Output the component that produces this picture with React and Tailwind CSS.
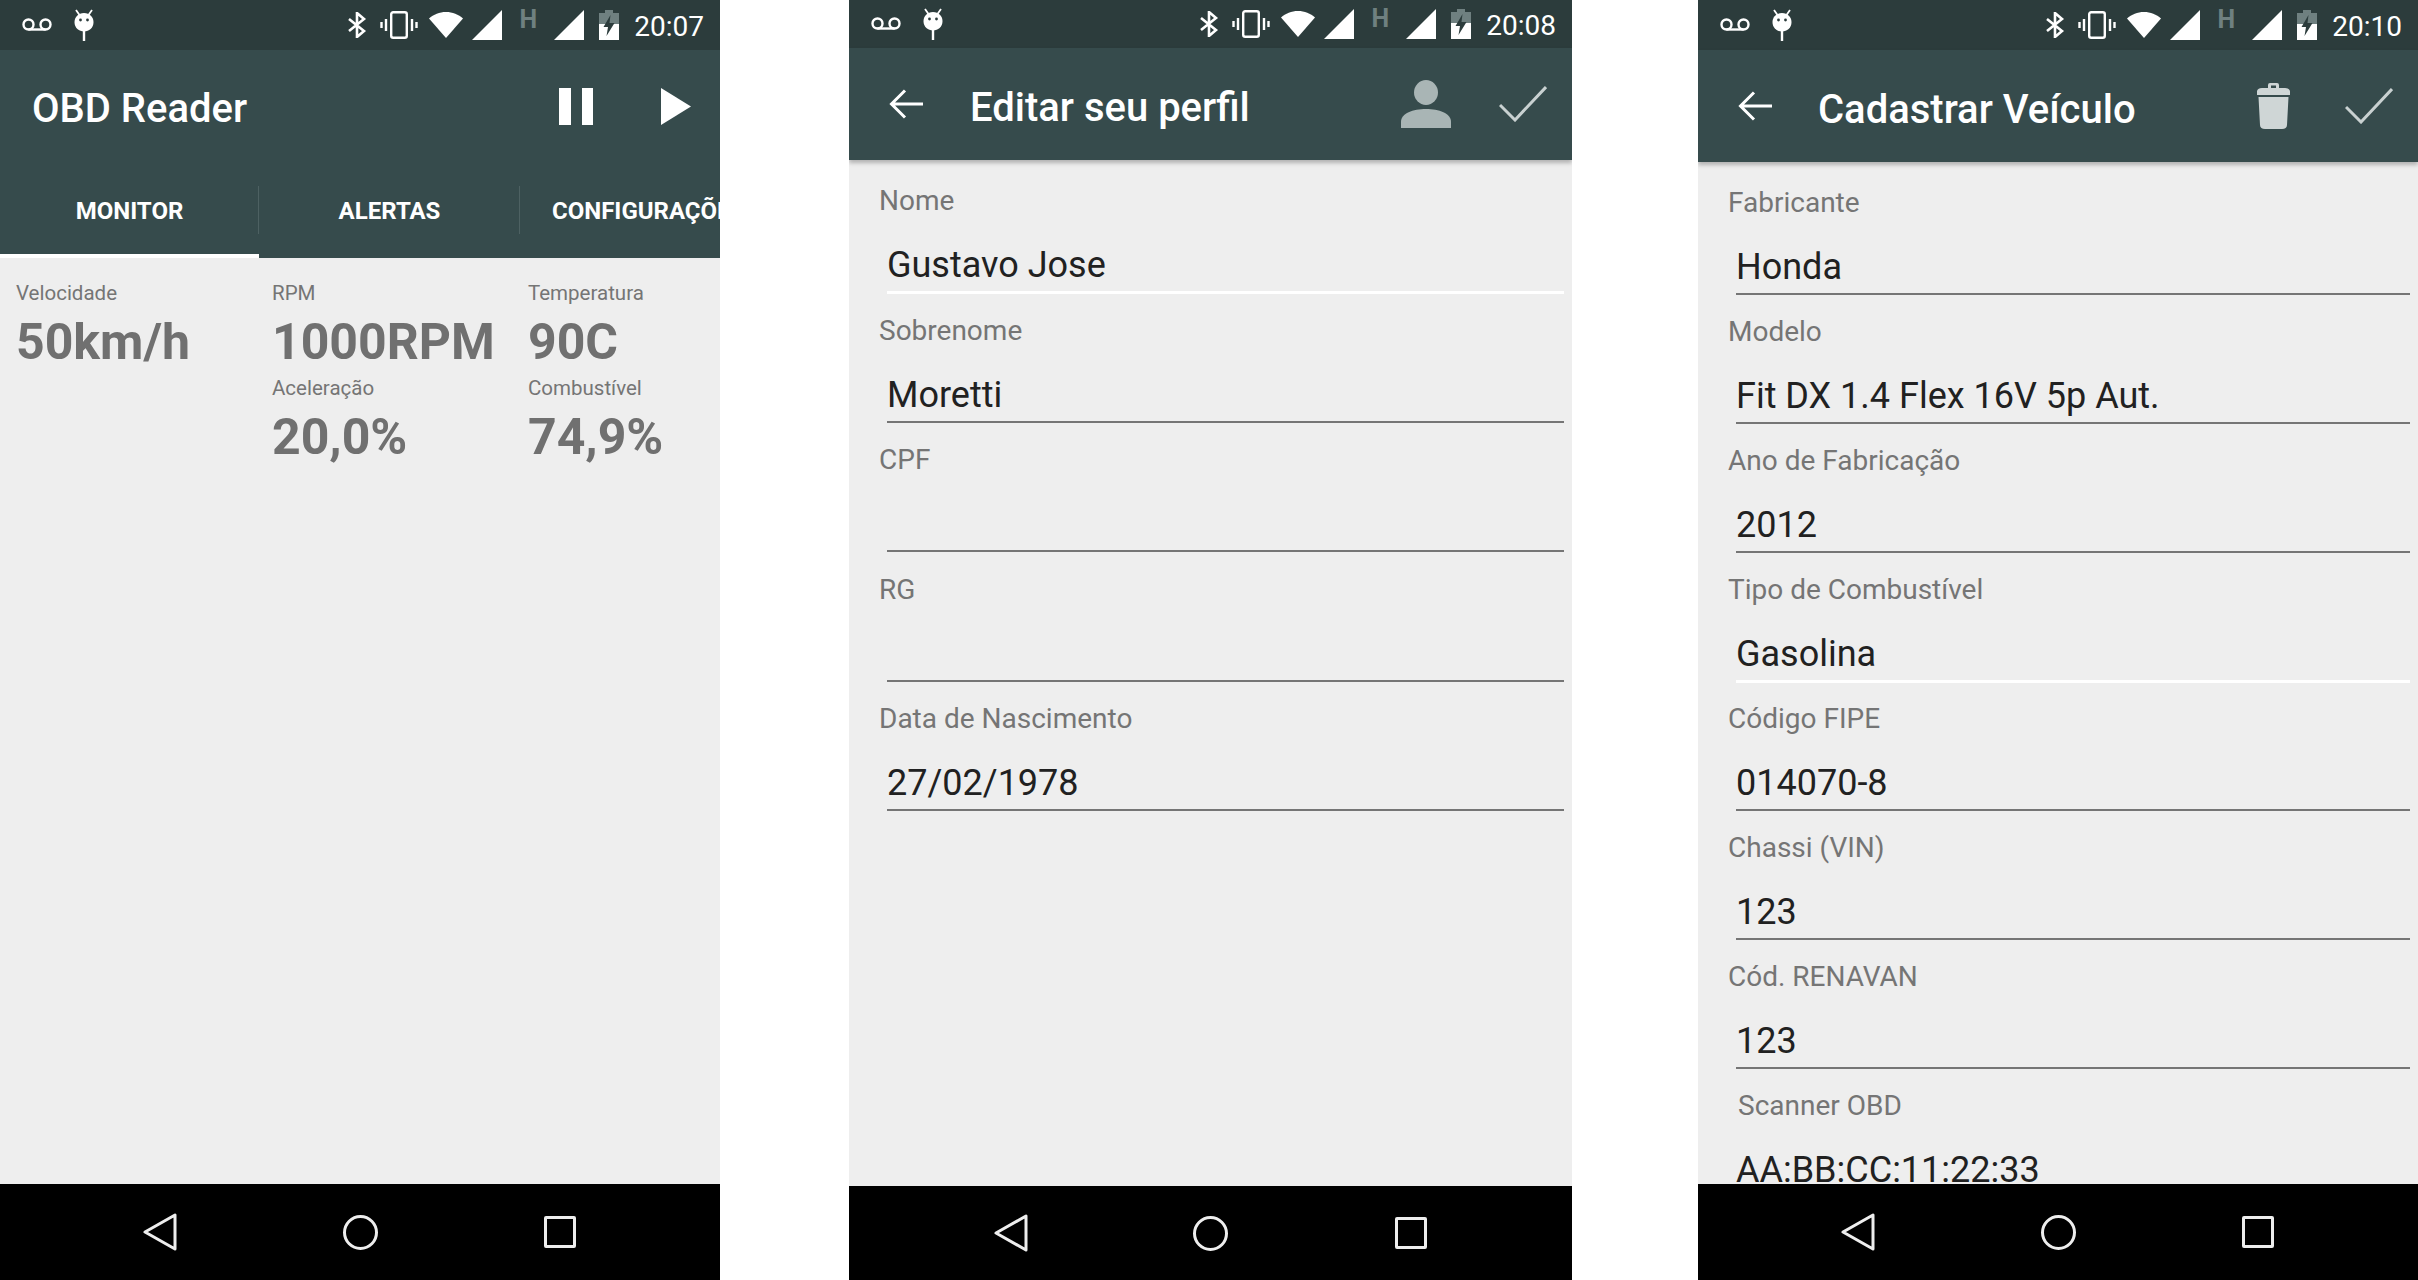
import React from 'react';

const sans = "font-['Roboto',sans-serif]";

function Voicemail() {
  return (
    <svg viewBox="0 0 32 14" className="w-[32px] h-[14px]" fill="none" stroke="white" strokeWidth="2.4">
      <circle cx="7.5" cy="6.5" r="5" />
      <circle cx="24.5" cy="6.5" r="5" />
      <path d="M7.5 11.5h17" />
    </svg>
  );
}

function DebugBug() {
  return (
    <svg viewBox="0 0 22 32" className="w-[22px] h-[32px] ml-[20px]" fill="white">
      <path d="M3 1l3.5 5M19 1l-3.5 5" stroke="white" strokeWidth="1.8" />
      <path d="M11 4c5.5 0 9.5 4 9.5 9 0 6-4.5 9.5-9.5 9.5S1.500 19 1.500 13c0-5 4-9 9.500-9z" />
      <circle cx="7.500" cy="11" r="1.400" fill="#2c3c3c" />
      <circle cx="14.500" cy="11" r="1.400" fill="#2c3c3c" />
      <rect x="9.800" y="22" width="2.400" height="10" />
    </svg>
  );
}

function Bluetooth() {
  return (
    <svg viewBox="0 0 22 26" className="w-[22px] h-[26px]" fill="none" stroke="white" strokeWidth="2.600">
      <path d="M3 7l15 12-7 6V1l7 6L3 19" />
    </svg>
  );
}

function Vibrate() {
  return (
    <svg viewBox="0 0 38 28" className="w-[38px] h-[28px] ml-[12px]" fill="none" stroke="white" strokeWidth="2.400">
      <rect x="11.200" y="1.200" width="15.600" height="25.600" rx="2" />
      <path d="M6 8v12M1.500 11v6M32 8v12M36.500 11v6" />
    </svg>
  );
}

function Wifi() {
  return (
    <svg viewBox="0 0 34 26" className="w-[34px] h-[26px] ml-[11px]" fill="white">
      <path d="M17 26L0 6.500C4.500 2.500 10.500 0 17 0s12.500 2.500 17 6.500z" />
    </svg>
  );
}

function Signal({ className }) {
  return (
    <svg viewBox="0 0 30 30" className={className} fill="white">
      <path d="M0 30L30 0v30z" />
    </svg>
  );
}

function Battery() {
  return (
    <svg viewBox="0 0 20 30" className="w-[20px] h-[30px] ml-[15px]">
      <path d="M6 0h8v3h6v27H0V3h6z" fill="white" />
      <path d="M6 0h8v3h6v11H0V3h6z" fill="#6f8080" />
      <path d="M11.500 5L4.500 17h4.500l-1.500 9 8-13h-5z" fill="#2c3c3c" />
    </svg>
  );
}

function StatusBar({ time, className }) {
  return (
    <div className={`flex items-center bg-[#2c3c3c] pl-[21px] pr-[16px] shrink-0 ${className}`}>
      <Voicemail />
      <DebugBug />
      <div className="flex-1" />
      <Bluetooth />
      <Vibrate />
      <Wifi />
      <Signal className="w-[30px] h-[30px] ml-[9px]" />
      <span className={`${sans} text-[25px] leading-[25px] font-bold text-[#6f8080] ml-[18px] -mt-[11px]`}>H</span>
      <Signal className="w-[30px] h-[30px] ml-[17px]" />
      <Battery />
      <span className={`${sans} text-[28px] leading-[34px] text-white ml-[15px] mt-[3px]`}>{time}</span>
    </div>
  );
}

function BackArrow() {
  return (
    <svg viewBox="0 0 34 30" className="w-[34px] h-[30px]" fill="none" stroke="white" strokeWidth="3">
      <path d="M34 15H3M16 1.500L2.500 15 16 28.500" />
    </svg>
  );
}

function Check() {
  return (
    <svg viewBox="0 0 48 36" className="w-[48px] h-[36px]" fill="none" stroke="#c9d1d1" strokeWidth="3">
      <path d="M1 19l15 15L47 1" />
    </svg>
  );
}

function Person() {
  return (
    <svg viewBox="0 0 50 48" className="w-[50px] h-[48px]" fill="#a9b5b5">
      <ellipse cx="25" cy="12.500" rx="12" ry="12.500" />
      <path d="M0 48v-6c0-9 12-13 25-13s25 4 25 13v6z" />
    </svg>
  );
}

function Trash() {
  return (
    <svg viewBox="0 0 33 46" className="w-[33px] h-[46px] mr-[7px]" fill="#cfd6d6">
      <path d="M11 5V2a2 2 0 0 1 2-2h7a2 2 0 0 1 2 2v3h6c3 0 5 1.500 5 3.500V12H0V8.500C0 6.500 2 5 5 5zM14 2.500V5h5V2.500z" fillRule="evenodd" />
      <path d="M1.500 14h30l-1.500 28c0 2.500-2 4-5 4H8c-3 0-5-1.500-5-4z" />
    </svg>
  );
}

function NavBar({ className }) {
  return (
    <div className={`flex justify-center items-center bg-black shrink-0 ${className}`}>
      <div className="w-[200px] flex justify-center">
        <svg viewBox="0 0 34 38" className="w-[34px] h-[38px]" fill="none" stroke="#eeeeee" strokeWidth="3" strokeLinejoin="round">
          <path d="M32 2v34L2 19z" />
        </svg>
      </div>
      <div className="w-[200px] flex justify-center">
        <div className="w-[35px] h-[35px] rounded-full border-[3px] border-[#eeeeee]" />
      </div>
      <div className="w-[200px] flex justify-center">
        <div className="w-[32px] h-[32px] rounded-[2px] border-[3px] border-[#eeeeee]" />
      </div>
    </div>
  );
}

function Reading({ label, value }) {
  return (
    <div className="h-[95px]">
      <div className="text-[20.5px] leading-[28px] text-[#757575] pt-[6px]">{label}</div>
      <div className="text-[50px] leading-[58px] font-bold text-[#707070] mt-[6px]">{value}</div>
    </div>
  );
}

function MonitorScreen() {
  return (
    <div className={`${sans} w-[720px] h-[1280px] flex flex-col shrink-0 overflow-hidden bg-[#eeeeee]`}>
      <StatusBar time="20:07" className="h-[50px]" />
      <div className="bg-[#364b4c] h-[112px] flex items-center pl-[32px] shrink-0">
        <div className="text-[40px] leading-[48px] font-medium text-white flex-1 pt-[6px]">OBD Reader</div>
        <div className="flex gap-[11px] w-[34px] h-[37px] mr-[68px]">
          <div className="w-[12px] bg-white" />
          <div className="w-[12px] bg-white" />
        </div>
        <svg viewBox="0 0 30 37" className="w-[30px] h-[37px] mr-[29px]" fill="white">
          <path d="M0 0l30 18.500L0 37z" />
        </svg>
      </div>
      <div className="bg-[#364b4c] h-[96px] flex shrink-0 text-[24px] font-bold text-white">
        <div className="w-[259px] shrink-0 flex items-center justify-center pt-[6px] border-b-[4px] border-white relative">
          MONITOR
          <div className="absolute right-0 top-[24px] h-[48px] w-px bg-[#4d6162]" />
        </div>
        <div className="w-[261px] shrink-0 flex items-center justify-center pt-[2px] relative">
          ALERTAS
          <div className="absolute right-0 top-[24px] h-[48px] w-px bg-[#4d6162]" />
        </div>
        <div className="flex items-center pl-[32px] pt-[2px] whitespace-nowrap">CONFIGURAÇÕES</div>
      </div>
      <div className="flex-1 grid grid-cols-[256px_256px_1fr] pl-[16px] pt-[15px] content-start">
        <div>
          <Reading label="Velocidade" value="50km/h" />
        </div>
        <div>
          <Reading label="RPM" value="1000RPM" />
          <Reading label="Aceleração" value="20,0%" />
        </div>
        <div>
          <Reading label="Temperatura" value="90C" />
          <Reading label="Combustível" value="74,9%" />
        </div>
      </div>
      <NavBar className="h-[96px]" />
    </div>
  );
}

function Field({ label, value, focused, heightClass = 'h-[129px]', labelClass = 'ml-[30px]' }) {
  return (
    <div className={`${heightClass} pt-[20px]`}>
      <div className={`text-[28px] leading-[34px] text-[#757575] ${labelClass}`}>{label}</div>
      <div className="text-[36px] leading-[42px] h-[42px] text-[#212121] ml-[38px] mt-[26px]">{value}</div>
      {focused ? (
        <div className="h-[3px] bg-white ml-[38px] mr-[8px] mt-[5px]" />
      ) : (
        <div className="h-[2px] bg-[#757575] ml-[38px] mr-[8px] mt-[5px]" />
      )}
    </div>
  );
}

function AppBar({ title, action, titleClass }) {
  return (
    <div className="bg-[#364b4c] h-[112px] flex items-center pl-[40px] pr-[25px] shrink-0 relative z-10 shadow-[0_3px_4px_rgba(0,0,0,0.25)]">
      <BackArrow />
      <div className={`text-[40px] leading-[48px] font-medium text-white flex-1 pt-[7px] ${titleClass}`}>{title}</div>
      {action}
      <div className="ml-[48px]">
        <Check />
      </div>
    </div>
  );
}

function ProfileScreen() {
  const tall = 'h-[129.5px]';
  return (
    <div className={`${sans} w-[723px] h-[1280px] flex flex-col shrink-0 overflow-hidden bg-[#eeeeee] ml-[129px]`}>
      <StatusBar time="20:08" className="h-[48px]" />
      <AppBar title="Editar seu perfil" action={<Person />} titleClass="ml-[47px]" />
      <div className="flex-1 overflow-hidden pt-[4px]">
        <Field label="Nome" value="Gustavo Jose" focused heightClass={tall} />
        <Field label="Sobrenome" value="Moretti" heightClass={tall} />
        <Field label="CPF" value="" heightClass={tall} />
        <Field label="RG" value="" heightClass={tall} />
        <Field label="Data de Nascimento" value="27/02/1978" heightClass={tall} />
      </div>
      <NavBar className="h-[94px]" />
    </div>
  );
}

function VehicleScreen() {
  return (
    <div className={`${sans} w-[720px] h-[1280px] flex flex-col shrink-0 overflow-hidden bg-[#eeeeee] ml-[126px]`}>
      <StatusBar time="20:10" className="h-[50px]" />
      <AppBar title="Cadastrar Veículo" action={<Trash />} titleClass="ml-[46px]" />
      <div className="flex-1 overflow-hidden pt-[4px]">
        <Field label="Fabricante" value="Honda" />
        <Field label="Modelo" value="Fit DX 1.4 Flex 16V 5p Aut." />
        <Field label="Ano de Fabricação" value="2012" />
        <Field label="Tipo de Combustível" value="Gasolina" focused />
        <Field label="Código FIPE" value="014070-8" />
        <Field label="Chassi (VIN)" value="123" />
        <Field label="Cód. RENAVAN" value="123" />
        <Field label="Scanner OBD" value="AA:BB:CC:11:22:33" labelClass="ml-[40px]" />
      </div>
      <NavBar className="h-[96px]" />
    </div>
  );
}

export default function App() {
  return (
    <div className="w-[2418px] h-[1280px] flex bg-white overflow-hidden">
      <MonitorScreen />
      <ProfileScreen />
      <VehicleScreen />
    </div>
  );
}
